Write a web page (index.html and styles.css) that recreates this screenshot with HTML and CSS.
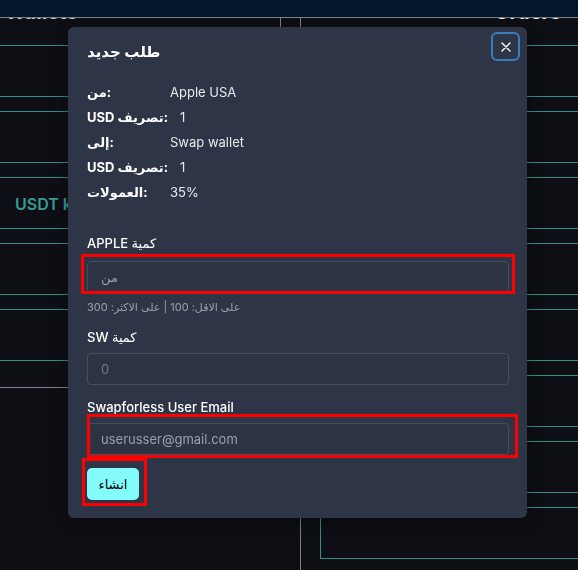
FILE: index.html
```html
<!DOCTYPE html>
<html lang="ar">
<head>
    <meta charset="UTF-8">
    <meta name="viewport" content="width=device-width, initial-scale=1.0">
    <link rel="stylesheet" href="styles.css">
</head>
<body>
    <header class="topbar"></header>

    <main class="board">
        <section class="col col-left">
            <h3 class="col-title">Wallets</h3>
            <div class="card"></div>
            <div class="card"></div>
            <div class="card"><span class="card-name">USDT key</span></div>
            <div class="card"></div>
            <div class="card"></div>
        </section>
        <section class="col col-right">
            <h3 class="col-title col-title-end">Orders</h3>
            <div class="card"></div>
            <div class="card"></div>
            <div class="card"></div>
            <div class="card"></div>
            <div class="card"></div>
            <div class="card"></div>
            <div class="card"></div>
            <div class="card"></div>
        </section>
    </main>

    <div class="overlay">
        <div class="modal">
            <div class="modal-head">
                <h2 class="modal-title">طلب جديد</h2>
                <button class="btn-close" type="button">
                    <svg width="10" height="10" viewBox="0 0 10 10">
                        <path d="M1 1 L9 9 M9 1 L1 9" stroke="#fff" stroke-width="1.4" stroke-linecap="round"/>
                    </svg>
                </button>
            </div>

            <div class="modal-body">
                <dl class="summary">
                    <div class="summary-row"><dt>من:</dt><dd>Apple USA</dd></div>
                    <div class="summary-row"><dt>USD تصريف:</dt><dd class="num">1</dd></div>
                    <div class="summary-row"><dt>إلى:</dt><dd>Swap wallet</dd></div>
                    <div class="summary-row"><dt>USD تصريف:</dt><dd class="num">1</dd></div>
                    <div class="summary-row"><dt>العمولات:</dt><dd>35%</dd></div>
                </dl>

                <form class="order-form" onsubmit="return false">
                    <div class="field field-first">
                        <label class="field-label">APPLE كمية</label>
                        <div class="marked">
                            <input class="input" type="text" placeholder="من">
                            <span class="mark mark-apple"></span>
                        </div>
                        <small class="hint">على الاقل: 100 | على الاكثر: 300</small>
                    </div>

                    <div class="field">
                        <label class="field-label">SW كمية</label>
                        <input class="input input-muted" type="text" placeholder="0">
                    </div>

                    <div class="field">
                        <label class="field-label">Swapforless User Email</label>
                        <div class="marked">
                            <input class="input" type="email" placeholder="userusser@gmail.com">
                            <span class="mark mark-email"></span>
                        </div>
                    </div>

                    <div class="marked marked-btn">
                        <button class="btn-create" type="submit">انشاء</button>
                        <span class="mark mark-btn"></span>
                    </div>
                </form>
            </div>
        </div>
    </div>
</body>
</html>
```

FILE: styles.css
```css
* {
    box-sizing: border-box;
    margin: 0;
    padding: 0;
}

body {
    background: #0d0f14;
    font-family: 'Inter', 'DejaVu Sans', sans-serif;
    color: #fff;
    overflow: hidden;
    height: 570px;
}

.topbar {
    position: fixed;
    top: 0;
    left: 0;
    right: 0;
    height: 18px;
    background: #03172a;
    border-bottom: 1px solid #7a8290;
    z-index: 2;
}

.board {
    display: flex;
    height: 570px;
}

.col {
    display: flex;
    flex-direction: column;
    gap: 14px;
}

.col-left {
    width: 281px;
    flex-shrink: 0;
    border-right: 1px solid #7a8290;
    border-bottom: 1px solid #7a8290;
    padding-bottom: 26px;
    align-self: flex-start;
}

.col-left .card {
    border-left: none;
}

.col-right {
    flex: 1;
    margin-left: 19px;
    border-left: 1px solid #7a8290;
    padding-left: 19px;
}

.col-right .card {
    border-right: none;
}

.col-title {
    height: 24px;
    margin-bottom: 7px;
    font-size: 20px;
    line-height: 24px;
    color: #c9ccd2;
    padding-left: 5px;
    white-space: nowrap;
    overflow: hidden;
}

.col-title-end {
    padding-left: 174px;
    color: #fff;
}

.card {
    height: 52px;
    border: 1px solid #2f8f88;
    display: flex;
    align-items: center;
    padding-left: 15px;
}

.card-name {
    color: #3a9a93;
    font-weight: 600;
    font-size: 16px;
    margin-top: 2px;
    white-space: nowrap;
}

/* modal */

.overlay {
    position: absolute;
    inset: 0;
    padding: 27px 0 0 68px;
    z-index: 3;
}

.modal {
    width: 459px;
    background: #2e3546;
    border-radius: 6px;
    box-shadow: 0 4px 16px rgba(0, 0, 0, 0.4);
}

.modal-head {
    display: flex;
    justify-content: space-between;
    align-items: flex-start;
    padding: 5px 7px 0 19px;
}

.modal-title {
    margin-top: 8px;
    font-size: 15px;
    line-height: 24px;
    font-weight: 700;
}

.btn-close {
    width: 29px;
    height: 29px;
    border: 2px solid #3b7cc0;
    border-radius: 6px;
    background: transparent;
    display: flex;
    align-items: center;
    justify-content: center;
    cursor: pointer;
}

.modal-body {
    padding: 0 18px 18px 19px;
}

.summary {
    margin-top: 16px;
}

.summary-row {
    display: flex;
    font-size: 13px;
    line-height: 25px;
}

.summary-row dt {
    width: 83px;
    font-weight: 700;
}

.summary-row dd {
    color: #e8eaee;
}

.summary-row dd.num {
    padding-left: 10px;
}

.field {
    display: flex;
    flex-direction: column;
    margin-top: 12px;
}

.field-first {
    margin-top: 28px;
}

.field-label {
    font-size: 13px;
    line-height: 20px;
    font-weight: 500;
    margin-bottom: 6px;
}

.field-first .field-label {
    margin-bottom: 8px;
}

.marked {
    position: relative;
}

.input {
    width: 100%;
    height: 32px;
    background: #2c3343;
    border: 1px solid #474e5f;
    border-radius: 4px;
    padding: 0 13px;
    font-family: inherit;
    font-size: 13px;
    color: #fff;
}

.input::placeholder {
    color: #9ba0aa;
}

.input-muted::placeholder {
    color: #737a88;
}

.hint {
    margin-top: 6px;
    font-size: 11px;
    line-height: 16px;
    color: #9ba0aa;
}

.marked-btn {
    margin-top: 13px;
    width: 52px;
}

.btn-create {
    width: 52px;
    height: 32px;
    border: none;
    border-radius: 5px;
    background: #84fcfb;
    color: #000;
    font-family: 'DejaVu Sans', sans-serif;
    font-size: 13px;
    cursor: pointer;
}

/* red highlight frames */

.mark {
    position: absolute;
    border: 3px solid #ff0000;
    pointer-events: none;
}

.mark-apple {
    top: -7px;
    bottom: -1px;
    left: -6px;
    right: -6px;
}

.mark-email {
    top: -9px;
    bottom: -3px;
    left: 0;
    right: -9px;
}

.mark-btn {
    top: -10px;
    bottom: -6px;
    left: -5px;
    right: -8px;
}
```
